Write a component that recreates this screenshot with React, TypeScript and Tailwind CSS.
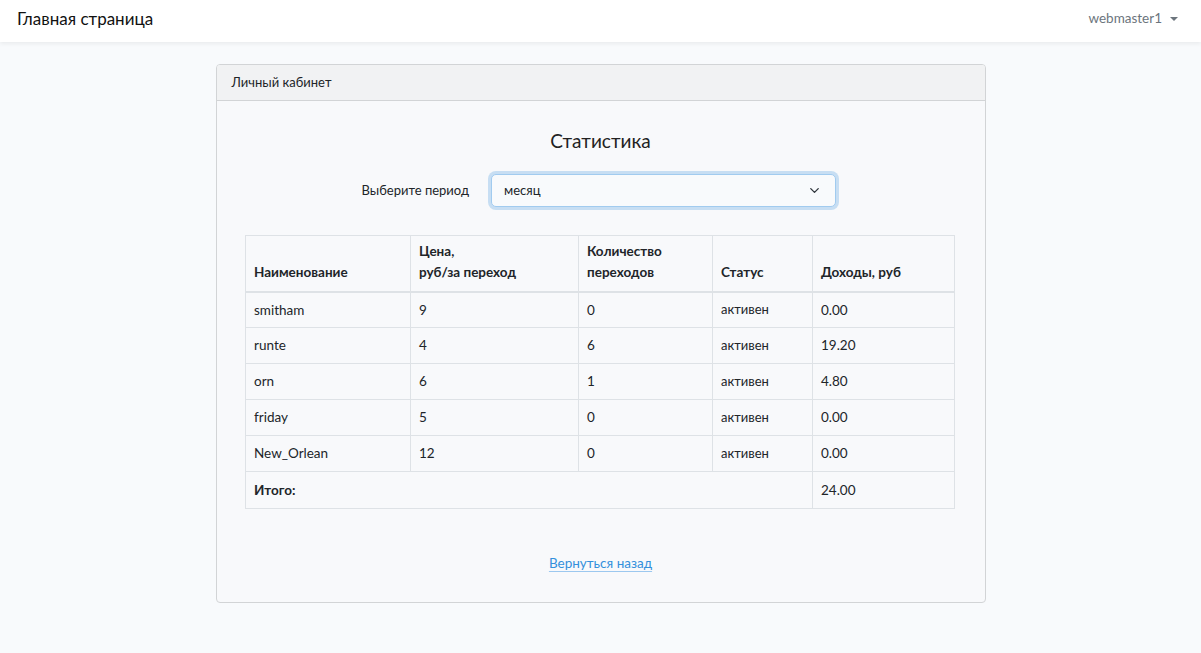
import { ChevronDown } from 'lucide-react';

const rows = [
    { name: 'smitham', price: '9', clicks: '0', status: 'активен', income: '0.00' },
    { name: 'runte', price: '4', clicks: '6', status: 'активен', income: '19.20' },
    { name: 'orn', price: '6', clicks: '1', status: 'активен', income: '4.80' },
    { name: 'friday', price: '5', clicks: '0', status: 'активен', income: '0.00' },
    { name: 'New_Orlean', price: '12', clicks: '0', status: 'активен', income: '0.00' },
];

export default function App() {
    return (
        <div
            className="min-h-[653px] bg-[#f8fafc] text-[#212529] text-[14px]"
            style={{ fontFamily: 'Lato, "Noto Sans", sans-serif' }}
        >
            {/* Navbar */}
            <div className="h-[42px] bg-white shadow-[0_2px_4px_rgba(0,0,0,0.06)] flex items-center px-[17px] pb-[5px]">
                <span className="text-[17px] text-[#111]">Главная страница</span>
                <div className="ml-auto flex items-center gap-[8px] text-[#6c757d] text-[13.5px] pr-[6px]">
                    <span>webmaster1</span>
                    <span className="w-0 h-0 border-l-[4px] border-r-[4px] border-t-[4px] border-l-transparent border-r-transparent border-t-[#6c757d]" />
                </div>
            </div>

            {/* Card */}
            <div className="pt-[22px] flex justify-center">
                <div className="w-[770px] h-[539px] border border-[#d2d4d6] rounded-[4px] bg-[#f8f9fb] overflow-hidden flex flex-col">
                    <div className="h-[36px] bg-[#f1f2f3] border-b border-[#d2d4d6] flex items-center px-[15px] text-[13px]">
                        Личный кабинет
                    </div>
                    <div className="flex flex-col items-center">
                        <h2 className="mt-[28px] text-[19px] leading-[24px] text-[#222]">Статистика</h2>

                        <div className="mt-[21px] flex items-center ml-[-4px]">
                            <span className="w-[130px] whitespace-nowrap text-right pr-[22px] text-[13px]">Выберите период</span>
                            <div className="w-[345px] h-[33px] rounded-[5px] border border-[#a1cbef] bg-[#f8fafc] shadow-[0_0_0_3px_rgba(52,144,220,0.25)] flex items-center pl-[12px] pr-[13px] text-[13px]">
                                <span>месяц</span>
                                <ChevronDown className="ml-auto w-[15px] h-[15px] text-[#343a40]" strokeWidth={2.2} />
                            </div>
                        </div>

                        <table className="mt-[28px] w-[710px] border-collapse text-[13.5px] ml-[-1px]">
                            <thead>
                                <tr className="h-[56px]">
                                    <th className="w-[165px] border border-[#dee2e6] border-b-2 align-bottom text-left font-bold px-[8px] pb-[8px] leading-[21px]">Наименование</th>
                                    <th className="w-[168px] border border-[#dee2e6] border-b-2 align-bottom text-left font-bold px-[8px] pb-[8px] leading-[21px]">Цена,<br />руб/за переход</th>
                                    <th className="w-[134px] border border-[#dee2e6] border-b-2 align-bottom text-left font-bold px-[8px] pb-[8px] leading-[21px]">Количество<br />переходов</th>
                                    <th className="w-[100px] border border-[#dee2e6] border-b-2 align-bottom text-left font-bold px-[8px] pb-[8px] leading-[21px]">Статус</th>
                                    <th className="border border-[#dee2e6] border-b-2 align-bottom text-left font-bold px-[8px] pb-[8px] leading-[21px]">Доходы, руб</th>
                                </tr>
                            </thead>
                            <tbody>
                                {rows.map((r) => (
                                    <tr key={r.name} className="h-[36px]">
                                        <td className="border border-[#dee2e6] px-[8px]">{r.name}</td>
                                        <td className="border border-[#dee2e6] px-[8px]">{r.price}</td>
                                        <td className="border border-[#dee2e6] px-[8px]">{r.clicks}</td>
                                        <td className="border border-[#dee2e6] px-[8px] text-[13px]">{r.status}</td>
                                        <td className="border border-[#dee2e6] px-[8px]">{r.income}</td>
                                    </tr>
                                ))}
                                <tr className="h-[37px]">
                                    <td colSpan={4} className="border border-[#dee2e6] px-[8px] font-bold">Итого:</td>
                                    <td className="border border-[#dee2e6] px-[8px]">24.00</td>
                                </tr>
                            </tbody>
                        </table>

                        <a href="#" className="mt-[44px] text-[13.5px] text-[#3490dc] underline decoration-[#9cc8ef] underline-offset-[3px]">
                            Вернуться назад
                        </a>
                    </div>
                </div>
            </div>
        </div>
    );
}
